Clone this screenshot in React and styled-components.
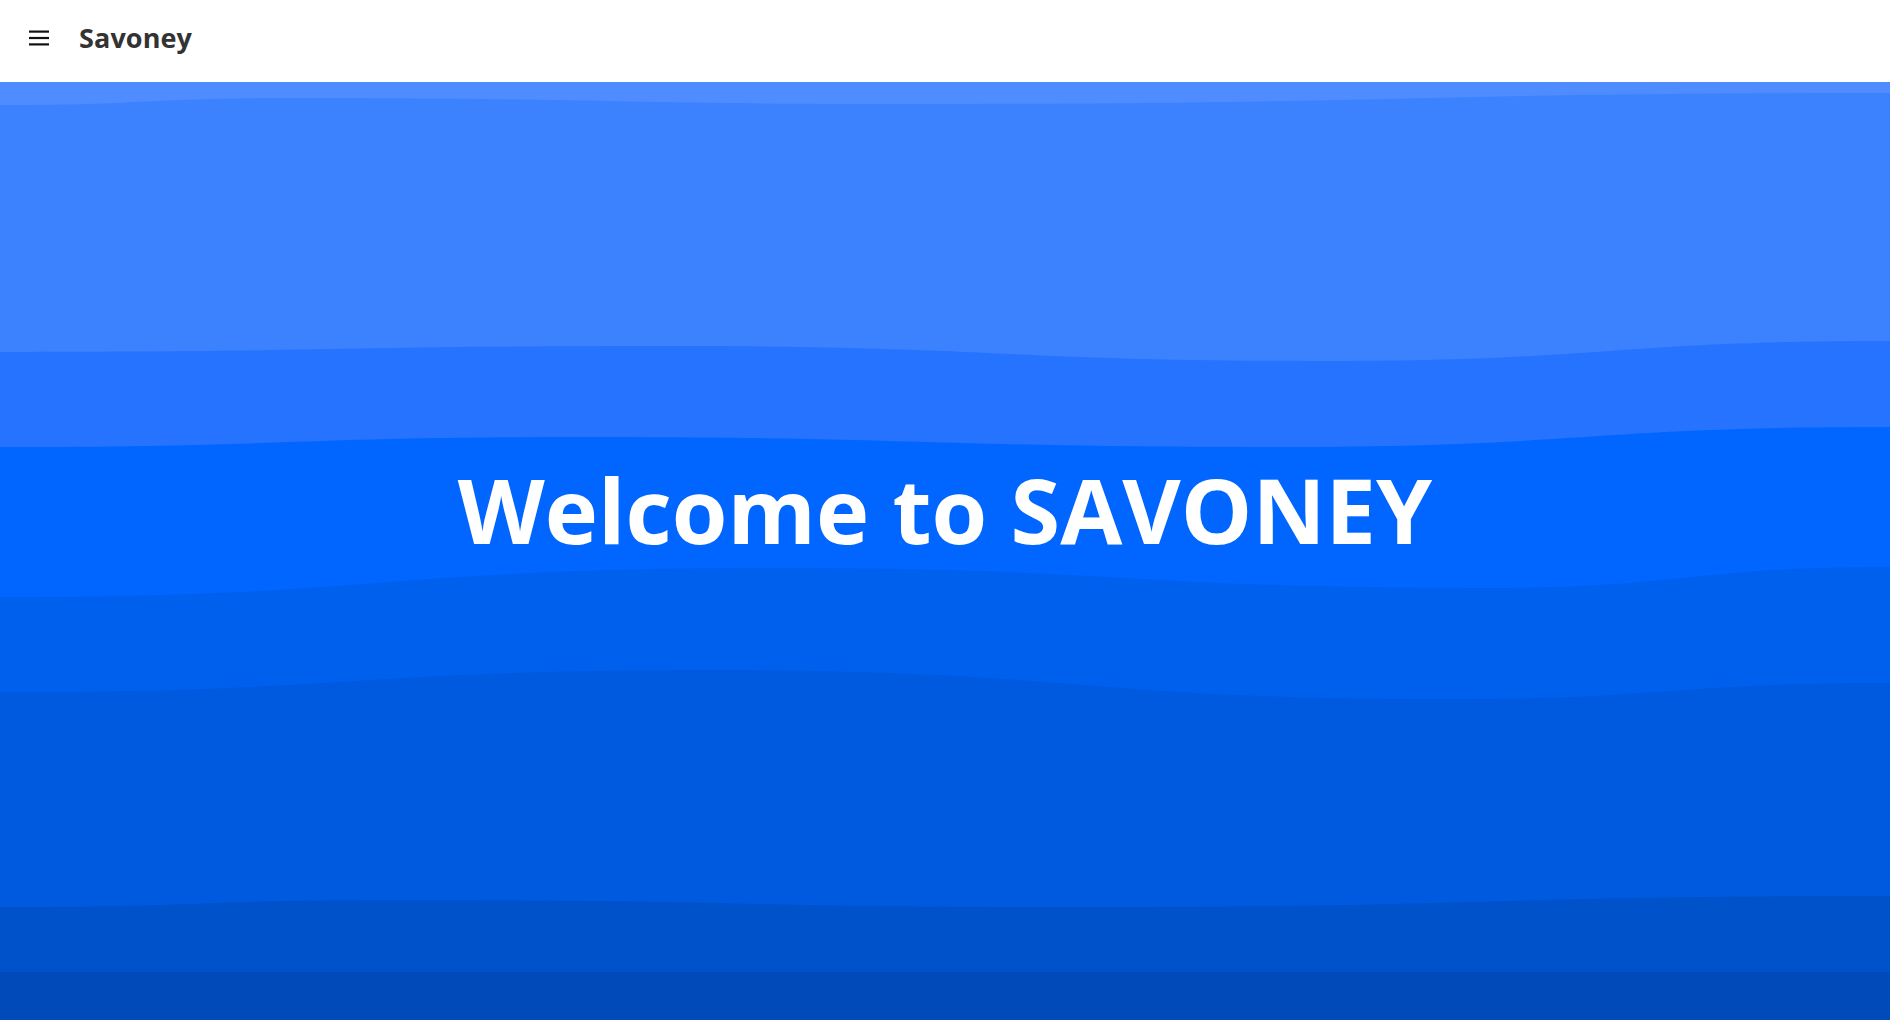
import React from 'react'
import styled, { createGlobalStyle } from 'styled-components'

// Estilos

const GlobalStyle = createGlobalStyle`
    html, body {
        margin: 0;
        padding: 0;
        height: 100%;
        overflow: hidden;
    }
    body {
        font-family: "Open Sans", "Noto Sans", sans-serif;
        background: #ffffff;
    }
`

const Page = styled.div`
    display: flex;
    flex-direction: column;
    height: 1020px;
`

const TopBar = styled.header`
    display: flex;
    align-items: center;
    gap: 30px;
    height: 82px;
    padding: 0 0 8px 29px;
    box-sizing: border-box;
    background: #ffffff;
    flex-shrink: 0;
`

const MenuButton = styled.button`
    display: flex;
    align-items: center;
    justify-content: center;
    width: 20px;
    height: 20px;
    padding: 0;
    margin-top: 2px;
    border: none;
    background: transparent;
    cursor: pointer;
`

const Brand = styled.h1`
    margin: 0;
    font-size: 27px;
    font-weight: 700;
    color: #333333;
    letter-spacing: 0.1px;
`

const Hero = styled.section`
    position: relative;
    flex: 1;
    display: flex;
    justify-content: center;
    align-items: flex-start;
    overflow: hidden;
    background: #004bb9;
`

const Waves = styled.svg`
    position: absolute;
    inset: 0;
    width: 100%;
    height: 100%;
    display: block;
`

const Title = styled.h2`
    position: relative;
    margin: 0;
    padding-top: 382px;
    font-size: 90px;
    line-height: 1;
    font-weight: 700;
    color: #ffffff;
    letter-spacing: 0;
`

const W = 1890
const H = 938

// limites entre capas (x, y) medidos sobre la captura
const LAYERS = [
    { color: '#4f8cff', pts: null },
    { color: '#3c82ff', pts: [[0, 23], [290, 16], [916, 22], [1890, 11]] },
    { color: '#2673ff', pts: [[0, 270], [675, 264], [1326, 279], [1890, 259]] },
    { color: '#0066ff', pts: [[0, 365], [579, 355], [1278, 365], [1890, 345]] },
    { color: '#0060ee', pts: [[0, 515], [771, 486], [1482, 506], [1890, 485]] },
    { color: '#005ae0', pts: [[0, 610], [711, 588], [1446, 617], [1890, 601]] },
    { color: '#0052ca', pts: [[0, 825], [398, 818], [1084, 825], [1890, 814]] },
    { color: '#004bb9', pts: [[0, 890], [1890, 890]] },
]

const wavePath = pts => {
    let d = `M${pts[0][0]},${pts[0][1]}`
    for (let i = 1; i < pts.length; i++) {
        const [x0, y0] = pts[i - 1]
        const [x1, y1] = pts[i]
        const dx = (x1 - x0) / 2
        d += ` C${x0 + dx},${y0} ${x1 - dx},${y1} ${x1},${y1}`
    }
    return d + ` L${W},${H} L0,${H} Z`
}

const MenuIcon = () => (
    <svg width="20" height="16" viewBox="0 0 20 16">
        <rect x="0" y="0.5" width="20" height="2.2" fill="#111" />
        <rect x="0" y="6.9" width="20" height="2.2" fill="#111" />
        <rect x="0" y="13.3" width="20" height="2.2" fill="#111" />
    </svg>
)

const App = () => {
    return (
        <Page>
            <GlobalStyle />
            <TopBar>
                <MenuButton aria-label="menu">
                    <MenuIcon />
                </MenuButton>
                <Brand>Savoney</Brand>
            </TopBar>
            <Hero>
                <Waves viewBox={`0 0 ${W} ${H}`} preserveAspectRatio="none">
                    {LAYERS.map((layer, i) =>
                        layer.pts ? (
                            <path key={i} d={wavePath(layer.pts)} fill={layer.color} />
                        ) : (
                            <rect key={i} x="0" y="0" width={W} height={H} fill={layer.color} />
                        )
                    )}
                </Waves>
                <Title>Welcome to SAVONEY</Title>
            </Hero>
        </Page>
    )
}

export default App
